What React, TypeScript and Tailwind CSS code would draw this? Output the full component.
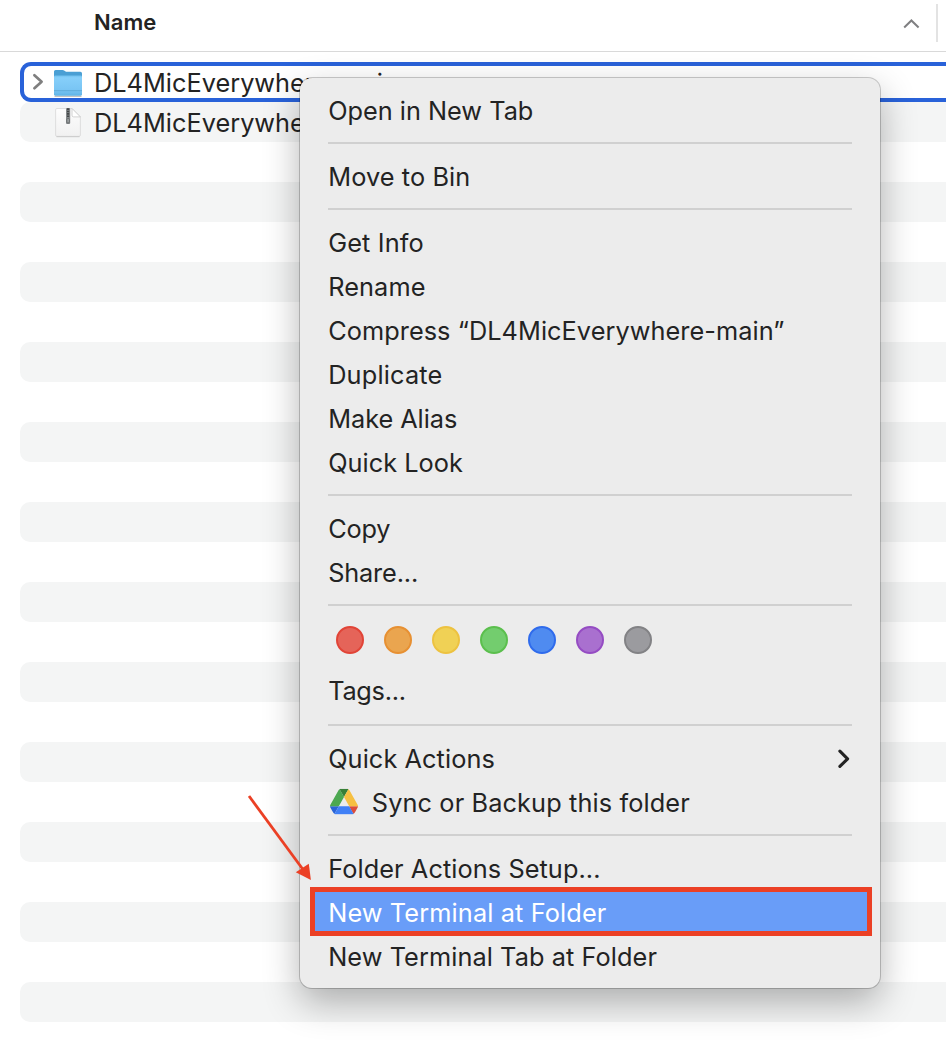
import React from 'react';

const INK = 'text-[#232323]';

type ItemProps = {
  label: string;
  tracking?: string;
  selected?: boolean;
  icon?: React.ReactNode;
  trailing?: React.ReactNode;
};

function MenuItem({ label, tracking = '', selected = false, icon, trailing }: ItemProps) {
  return (
    <div className={`flex h-11 items-center pr-7 pl-[28.2px] ${selected ? 'text-white' : INK}`}>
      {icon}
      <span className={`whitespace-pre ${tracking}`}>{label}</span>
      {trailing}
    </div>
  );
}

function Separator() {
  return (
    <div className="px-7 py-[9px]">
      <div className="mb-[2px] h-[2px] bg-[#d0d0d0]" />
    </div>
  );
}

function FolderIcon() {
  return (
    <svg className="h-[30px] w-[32px]" viewBox="0 0 32 30" fill="none">
      <defs>
        <linearGradient id="folderFront" x1="0" y1="0" x2="0" y2="1">
          <stop offset="0" stopColor="#6fc0ee" />
          <stop offset="0.12" stopColor="#86cffa" />
          <stop offset="0.75" stopColor="#78c4f3" />
          <stop offset="1" stopColor="#5fb3e5" />
        </linearGradient>
      </defs>
      <path d="M2.5 28.2H29.5" stroke="#000" strokeOpacity=".3" strokeWidth="1.2" />
      <path d="M2 3.6Q2 2 3.6 2H10.5Q11.6 2 12.5 2.7L14 3.8H28.4Q30 3.8 30 5.4V12H2Z" fill="#4a9fd4" />
      <path d="M2 8.6Q2 7.4 3.2 7.4H28.8Q30 7.4 30 8.6V26.3Q30 27.7 28.6 27.7H3.4Q2 27.7 2 26.3Z" fill="url(#folderFront)" />
      <path d="M2 22.7H30" stroke="#5eabd9" strokeWidth="1" />
    </svg>
  );
}

function ZipIcon() {
  return (
    <svg className="h-[32px] w-[32px]" viewBox="0 0 32 32" fill="none">
      <defs>
        <linearGradient id="zipPaper" x1="0" y1="0" x2="0" y2="1">
          <stop offset="0" stopColor="#fdfdfd" />
          <stop offset="1" stopColor="#f1f1f1" />
        </linearGradient>
      </defs>
      <path
        d="M5 2.5H20L28.4 11V29Q28.4 30.4 27 30.4H5Q3.6 30.4 3.6 29V3.9Q3.6 2.5 5 2.5Z"
        fill="url(#zipPaper)"
        stroke="#d8d8d8"
        strokeWidth="0.8"
      />
      <path d="M4.5 30.7H27.5" stroke="#c4c4c4" strokeWidth="0.8" />
      <path d="M20 2.5V9.2Q20 10.9 21.7 10.9H28.4Z" fill="#fff" stroke="#c6c6c6" strokeWidth="0.8" />
      <rect x="14" y="2" width="4.2" height="16" rx="1" fill="#85898b" />
      <path d="M16.1 2.3V12" stroke="#454849" strokeWidth="2.2" strokeDasharray="1.6 0.8" />
      <rect x="15" y="12.6" width="2.2" height="4.2" rx="0.5" fill="#a9adaf" stroke="#4f5253" strokeWidth="0.6" />
    </svg>
  );
}

function DriveIcon() {
  return (
    <svg className="mr-[13.8px] ml-[1.8px] h-[25.5px] w-7 -translate-y-[1.2px]" viewBox="0 0 87.3 78" preserveAspectRatio="none">
      <path d="m6.6 66.85 3.85 6.65c.8 1.4 1.95 2.5 3.3 3.3l13.75-23.8h-27.5c0 1.55.4 3.1 1.2 4.5z" fill="#2a64d6" />
      <path d="m43.65 25-13.75-23.8c-1.35.8-2.5 1.9-3.3 3.3l-25.4 44a9.06 9.06 0 0 0 -1.2 4.5h27.5z" fill="#4ca851" />
      <path d="m73.55 76.8c1.35-.8 2.5-1.9 3.3-3.3l1.6-2.75 7.65-13.25c.8-1.4 1.2-2.95 1.2-4.5h-27.5l5.85 11.5z" fill="#dc4d3c" />
      <path d="m43.65 25 13.75-23.8c-1.35-.8-2.9-1.2-4.5-1.2h-18.5c-1.6 0-3.15.45-4.5 1.2z" fill="#377f38" />
      <path d="m59.8 53h-32.3l-13.75 23.8c1.35.8 2.9 1.2 4.5 1.2h50.8c1.6 0 3.15-.45 4.5-1.2z" fill="#4080f6" />
      <path d="m73.4 26.5-12.7-22c-.8-1.4-1.95-2.5-3.3-3.3l-13.75 23.8 16.15 28h27.45c0-1.55-.4-3.1-1.2-4.5z" fill="#f6c042" />
    </svg>
  );
}

function SubmenuChevron() {
  return (
    <svg className="mr-[2px] ml-auto h-[20px] w-[12px]" viewBox="0 0 12 20" fill="none">
      <path d="M1.9 2.2 9.6 9.8 1.9 17.4" stroke="#232323" strokeWidth="3.1" strokeLinecap="round" strokeLinejoin="round" />
    </svg>
  );
}

const TAGS = [
  'bg-[#e56459] border-[#e14437]',
  'bg-[#eaa54f] border-[#e79032]',
  'bg-[#f0d155] border-[#edc240]',
  'bg-[#73cd6e] border-[#5bbf4d]',
  'bg-[#4f8bf0] border-[#2f6bec]',
  'bg-[#a970cf] border-[#954cc3]',
  'bg-[#9b9b9f] border-[#828285]',
];

const STRIPES = Array.from({ length: 11 }, (_, i) => i);

export default function App() {
  return (
    <div className="relative h-[1050px] w-[946px] overflow-hidden bg-white font-['Inter',sans-serif] text-[25.3px] leading-none">
      <header className={`flex h-[52px] justify-between border-b border-[#d9d9d9] ${INK}`}>
        <span className="mt-[11px] ml-[94px] text-[22px] leading-[22px] font-semibold tracking-[0.05px]">Name</span>
        <div className="flex">
          <svg className="mt-[17px] mr-[16px] h-[14px] w-[18px]" viewBox="0 0 18 14" fill="none">
            <path d="M2.2 10.5 9.4 3.5 16.6 10.5" stroke="#7f7f81" strokeWidth="2" />
          </svg>
          <div className="mt-1 mr-2 h-[38px] w-[2px] bg-[#e3e3e3]" />
        </div>
      </header>

      <main className={`flex flex-col pt-[10px] pl-5 ${INK}`}>
        <div className="flex h-10 items-center rounded-l-[11px] border-4 border-r-0 border-[#2962d9]">
          <svg className="ml-[7px] h-[20px] w-[14px]" viewBox="0 0 14 20" fill="none">
            <path d="M3.4 3.2 10.6 9.7 3.4 16.2" stroke="#7f7f7f" strokeWidth="2.7" strokeLinecap="round" strokeLinejoin="round" />
          </svg>
          <div className="mt-px ml-[7px]">
            <FolderIcon />
          </div>
          <span className="mt-[2px] ml-[10px] tracking-[0.02px]">DL4MicEverywhere-main</span>
        </div>
        <div className="flex h-10 items-center rounded-l-[10px] bg-[#f4f5f5] pl-[32px]">
          <ZipIcon />
          <span className="mt-[2px] ml-[10px] tracking-[0.02px]">DL4MicEverywhere</span>
        </div>
        {STRIPES.map((i) => (
          <div key={i} className="mt-10 h-10 rounded-l-[10px] bg-[#f4f5f5]" />
        ))}
      </main>

      <div className="absolute top-[78px] left-[300px] h-[910px] w-[580px] rounded-[12px] bg-[#ececec] pt-[11px] shadow-[0_0_0_1px_rgba(0,0,0,0.2),0_14px_36px_rgba(0,0,0,0.3)]">
        <MenuItem label="Open in New Tab" />
        <Separator />
        <MenuItem label="Move to Bin" tracking="tracking-[0.1px]" />
        <Separator />
        <MenuItem label="Get Info" tracking="tracking-[0.14px]" />
        <MenuItem label="Rename" tracking="tracking-[0.1px]" />
        <MenuItem label="Compress “DL4MicEverywhere-main”" tracking="tracking-[0.06px]" />
        <MenuItem label="Duplicate" tracking="tracking-[0.18px]" />
        <MenuItem label="Make Alias" tracking="tracking-[-0.05px]" />
        <MenuItem label="Quick Look" tracking="tracking-[0.02px]" />
        <Separator />
        <MenuItem label="Copy" tracking="tracking-[-0.2px]" />
        <MenuItem label="Share..." tracking="tracking-[-0.16px]" />
        <Separator />
        <div className="flex h-[52px] gap-5 pt-[9px] pl-9">
          {TAGS.map((tag) => (
            <div key={tag} className={`size-7 rounded-full border-2 ${tag}`} />
          ))}
        </div>
        <div className="h-[46px]">
          <MenuItem label="Tags..." tracking="tracking-[-0.27px]" />
        </div>
        <Separator />
        <MenuItem label="Quick Actions" tracking="tracking-[0.08px]" trailing={<SubmenuChevron />} />
        <MenuItem label="Sync or Backup this folder" tracking="tracking-[0.12px]" icon={<DriveIcon />} />
        <Separator />
        <MenuItem label="Folder Actions Setup..." tracking="tracking-[0.08px]" />
        <div className="mr-[12px] ml-[14px] bg-[#699df8]">
          <div className="-ml-[14px]">
            <MenuItem label="New Terminal at Folder" tracking="tracking-[0.13px]" selected />
          </div>
        </div>
        <MenuItem label="New Terminal Tab at Folder" tracking="tracking-[0.08px]" />
      </div>

      <div className="absolute top-[887px] left-[310px] h-[49px] w-[562px] border-[5px] border-[#eb4025]" />
      <svg className="absolute top-[790px] left-[244px] h-[94px] w-[72px]" viewBox="244 790 72 94" fill="none">
        <path d="M249 796 303 869.5" stroke="#eb4025" strokeWidth="2.8" />
        <path d="M310.9 880 295.8 872.3 308.8 863.8Z" fill="#eb4025" />
      </svg>
    </div>
  );
}
